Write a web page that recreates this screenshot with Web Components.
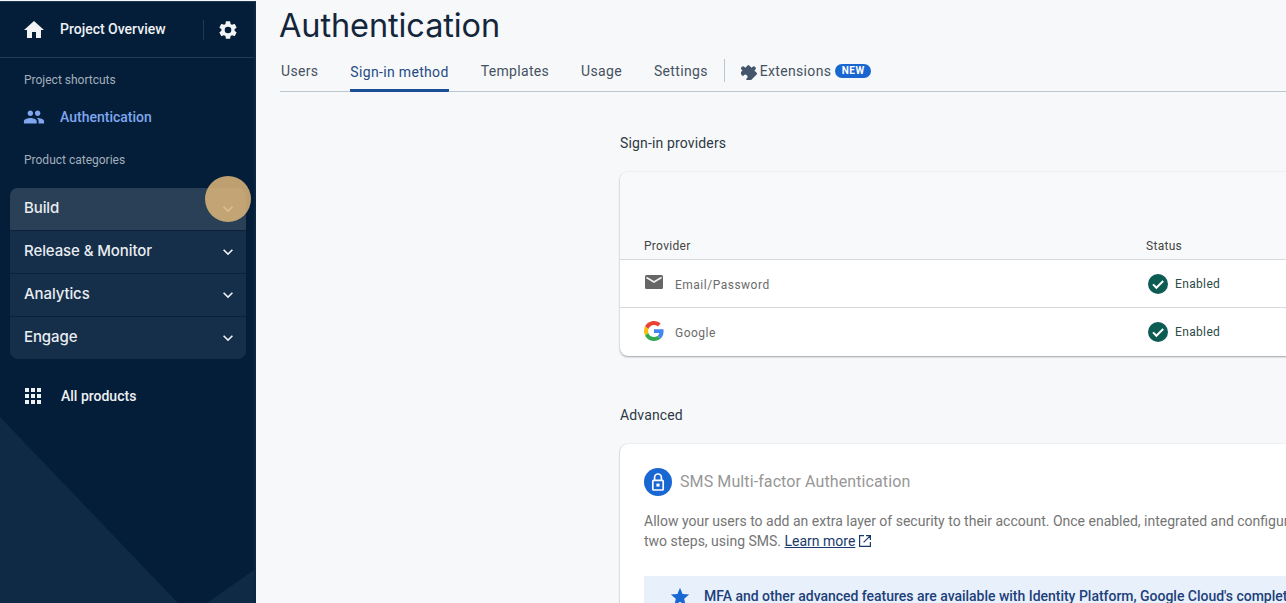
<!DOCTYPE html>
<html lang="en">
<head>
<meta charset="utf-8">
<title>Authentication</title>
<style>
  html, body { margin: 0; height: 100%; overflow: hidden; background: #f6f8fa; }
</style>
</head>
<body>
<fb-console></fb-console>

<script>
const ICONS = {
  home: '<svg width="24" height="24" viewBox="0 0 24 24" fill="#f1f3f4"><path d="M10 20v-6h4v6h5v-8h3L12 3 2 12h3v8z"/></svg>',
  gear: '<svg width="22" height="22" viewBox="0 0 24 24" fill="#f1f3f4"><path d="M19.14 12.94c.04-.3.06-.61.06-.94 0-.32-.02-.64-.07-.94l2.03-1.58a.49.49 0 0 0 .12-.61l-1.92-3.32a.49.49 0 0 0-.59-.22l-2.39.96c-.5-.38-1.03-.7-1.62-.94l-.36-2.54a.48.48 0 0 0-.48-.41h-3.84a.47.47 0 0 0-.47.41l-.36 2.54c-.59.24-1.13.57-1.62.94l-2.39-.96a.49.49 0 0 0-.59.22L2.74 8.87a.48.48 0 0 0 .12.61l2.03 1.58c-.05.3-.09.63-.09.94s.02.64.07.94l-2.03 1.58a.49.49 0 0 0-.12.61l1.92 3.32c.12.22.37.29.59.22l2.39-.96c.5.38 1.03.7 1.62.94l.36 2.54c.05.24.24.41.48.41h3.84c.24 0 .44-.17.47-.41l.36-2.54c.59-.24 1.13-.56 1.62-.94l2.39.96c.22.08.47 0 .59-.22l1.92-3.32a.48.48 0 0 0-.12-.61zM12 15.6A3.6 3.6 0 1 1 12 8.4a3.6 3.6 0 0 1 0 7.2z"/></svg>',
  people: '<svg width="22" height="22" viewBox="0 0 24 24" fill="#7fa6ee"><path d="M16 11c1.66 0 2.99-1.34 2.99-3S17.66 5 16 5s-3 1.34-3 3 1.34 3 3 3zm-8 0c1.66 0 2.99-1.34 2.99-3S9.66 5 8 5 5 6.34 5 8s1.34 3 3 3zm0 2c-2.33 0-7 1.17-7 3.5V19h14v-2.5C15 14.17 10.33 13 8 13zm8 0c-.29 0-.62.02-.97.05C16.19 13.89 17 15.02 17 16.5V19h6v-2.5c0-2.33-4.67-3.5-7-3.5z"/></svg>',
  chevron: '<svg width="20" height="20" viewBox="0 0 24 24" fill="#eef1f4"><path d="M7.41 8.59 12 13.17l4.59-4.58L18 10l-6 6-6-6z"/></svg>',
  grid: '<svg width="18" height="18" viewBox="0 0 18 18" fill="#eef1f4"><path d="M1 1h4v4H1zM7 1h4v4H7zM13 1h4v4h-4zM1 7h4v4H1zM7 7h4v4H7zM13 7h4v4h-4zM1 13h4v4H1zM7 13h4v4H7zM13 13h4v4h-4z"/></svg>',
  puzzle: '<svg width="16" height="16" viewBox="2 2 20 20" fill="#44566c"><g transform="rotate(-45 12 12)"><path d="M19.5 10.5H18V6.5A1.5 1.5 0 0 0 16.5 5H12.5V3.5a2.5 2.5 0 0 0-5 0V5H4.5A1.5 1.5 0 0 0 3 6.5v3.8h1.5a2.7 2.7 0 0 1 0 5.4H3v3.8A1.5 1.5 0 0 0 4.5 21h12a1.5 1.5 0 0 0 1.5-1.5v-4h1.5a2.5 2.5 0 0 0 0-5z"/></g></svg>',
  mail: '<svg width="18" height="14" viewBox="0 0 18 14"><rect width="18" height="14" rx="1.5" fill="#666"/><path d="M1.5 2.5 9 7l7.5-4.5" fill="none" stroke="#f1f1f1" stroke-width="1.6"/></svg>',
  google: '<svg width="20" height="20" viewBox="0 0 48 48"><path fill="#EA4335" d="M24 9.5c3.54 0 6.71 1.22 9.21 3.6l6.85-6.85C35.9 2.38 30.47 0 24 0 14.62 0 6.51 5.38 2.56 13.22l7.98 6.19C12.43 13.72 17.74 9.5 24 9.5z"/><path fill="#4285F4" d="M46.98 24.55c0-1.57-.15-3.09-.38-4.55H24v9.02h12.94c-.58 2.96-2.26 5.48-4.78 7.18l7.73 6c4.51-4.18 7.09-10.36 7.09-17.65z"/><path fill="#FBBC05" d="M10.53 28.59c-.48-1.45-.76-2.99-.76-4.59s.27-3.14.76-4.59l-7.98-6.19C.92 16.46 0 20.12 0 24c0 3.88.92 7.54 2.56 10.78l7.97-6.19z"/><path fill="#34A853" d="M24 48c6.48 0 11.93-2.13 15.89-5.81l-7.73-6c-2.15 1.45-4.92 2.3-8.16 2.3-6.26 0-11.57-4.22-13.47-9.91l-7.98 6.19C6.51 42.62 14.62 48 24 48z"/></svg>',
  check: '<svg width="20" height="20" viewBox="0 0 20 20"><circle cx="10" cy="10" r="10" fill="#0d5c54"/><path d="M5 10.4l3.4 3.4L15.2 7" fill="none" stroke="#fff" stroke-width="2"/></svg>',
  lock: '<svg width="28" height="28" viewBox="0 0 28 28"><circle cx="14" cy="14" r="14" fill="#1967d2"/><rect x="8.8" y="12.4" width="10.4" height="9.6" rx="1" fill="none" stroke="#fff" stroke-width="1.7"/><path d="M10.6 12.4V9.4a3.4 3.4 0 0 1 6.8 0v3" fill="none" stroke="#fff" stroke-width="1.7"/><rect x="12.4" y="15.6" width="3.2" height="3" fill="#fff"/></svg>',
  open: '<svg width="14" height="14" viewBox="0 0 14 14" fill="none" stroke="#1a3a6b" stroke-width="1.2"><path d="M6 1.6H1.6v10.8h10.8V8M8 1.6h4.4V6M12.4 1.6 5.6 8.4"/></svg>',
  star: '<svg width="22" height="22" viewBox="0 0 24 24" fill="#1967d2"><path d="M12 17.27 18.18 21l-1.64-7.03L22 9.24l-7.19-.61L12 2 9.19 8.63 2 9.24l5.46 4.73L5.82 21z"/></svg>'
};

function fill (host, html) {
  host.attachShadow({mode: 'open'}).innerHTML = html;
}

class FbConsole extends HTMLElement {
  constructor () {
    super();
    fill(this, `
      <style>
        :host { display: flex; height: 100vh; overflow: hidden; }
        fb-sidebar { flex: 0 0 256px; }
        main { flex: 1; min-width: 0; padding-left: 24px; overflow: hidden; }
      </style>
      <fb-sidebar></fb-sidebar>
      <main>
        <fb-page-header></fb-page-header>
        <fb-signin-panel></fb-signin-panel>
      </main>
    `);
  }
}

class FbSidebar extends HTMLElement {
  constructor () {
    super();
    fill(this, `
      <style>
        :host {
          display: block;
          position: relative;
          overflow: hidden;
          background: #041e39;
          box-sizing: border-box;
          border-top: 1px solid #1f3a55;
          margin-top: 1px;
          border-right: 2px solid #0d2741;
          color: #eef1f4;
          font: 500 14px Roboto, sans-serif;
        }
        :host::before, :host::after {
          content: "";
          position: absolute;
          inset: 0;
          background: #0f2a45;
        }
        :host::before { clip-path: polygon(0 415px, 178px 100%, 0 100%); }
        :host::after { clip-path: polygon(207px 100%, 100% 568px, 100% 100%); }
        .top, .content { position: relative; z-index: 1; }
        .top {
          display: flex;
          align-items: center;
          height: 55px;
          padding: 0 15px 0 22px;
          border-bottom: 1px solid #1f3a55;
        }
        .top .name { margin: -2px 0 0 14px; flex: 1; }
        .top .rule { width: 1px; height: 20px; background: #1f3a55; margin-right: 13px; }
        svg { display: block; }
        .label {
          font-size: 12px;
          font-weight: 400;
          color: #a3afbb;
          padding-left: 24px;
          line-height: 16px;
        }
        .shortcut {
          display: flex;
          align-items: center;
          height: 24px;
          padding-left: 23px;
          margin: 17px 0 23px;
          color: #7fa6ee;
        }
        .shortcut span { margin-left: 15px; }
        .content { padding-top: 14px; }
        fb-nav-group { margin: 20px 8px 0 10px; }
        .all {
          display: flex;
          align-items: center;
          height: 20px;
          padding-left: 24px;
          margin-top: 27px;
        }
        .all span { margin-left: 19px; }
        .marker {
          position: absolute;
          z-index: 2;
          left: 205px;
          top: 174px;
          width: 46px;
          height: 46px;
          border-radius: 50%;
          background: rgba(222, 182, 122, .85);
        }
      </style>
      <div class="top">
        ${ICONS.home}
        <span class="name">Project Overview</span>
        <span class="rule"></span>
        ${ICONS.gear}
      </div>
      <div class="content">
        <div class="label">Project shortcuts</div>
        <div class="shortcut">${ICONS.people}<span>Authentication</span></div>
        <div class="label">Product categories</div>
        <fb-nav-group>
          <fb-nav-row active>Build</fb-nav-row>
          <fb-nav-row>Release &amp; Monitor</fb-nav-row>
          <fb-nav-row>Analytics</fb-nav-row>
          <fb-nav-row>Engage</fb-nav-row>
        </fb-nav-group>
        <div class="all">${ICONS.grid}<span>All products</span></div>
      </div>
      <div class="marker"></div>
    `);
  }
}

class FbNavGroup extends HTMLElement {
  constructor () {
    super();
    fill(this, `
      <style>
        :host { display: block; border-radius: 8px; overflow: hidden; background: #152e49; }
      </style>
      <slot></slot>
    `);
  }
}

class FbNavRow extends HTMLElement {
  constructor () {
    super();
    fill(this, `
      <style>
        :host {
          display: flex;
          align-items: center;
          justify-content: space-between;
          box-sizing: border-box;
          height: 43px;
          padding: 0 8px 0 14px;
          border-bottom: 1px solid #0b2139;
          font: 500 15px Inter, sans-serif;
          letter-spacing: -.1px;
          color: #e8edf2;
        }
        :host(:last-child) { border-bottom: 0; height: 42px; }
        :host([active]) { background: #2a4056; }
        span { margin-bottom: 3px; }
        svg { display: block; }
      </style>
      <span><slot></slot></span>
      ${ICONS.chevron}
    `);
  }
}

class FbPageHeader extends HTMLElement {
  constructor () {
    super();
    fill(this, `
      <style>
        :host { display: block; color: #14263b; font-family: Roboto, sans-serif; }
        h1 {
          margin: 0 0 0 -1px;
          padding-top: 1px;
          font: 400 32.5px/49px Inter, sans-serif;
          letter-spacing: -.1px;
        }
        nav {
          display: flex;
          align-items: center;
          gap: 32px;
          height: 41px;
          border-bottom: 1px solid #bcc6d0;
          font-size: 14px;
          font-weight: 400;
          letter-spacing: .33px;
          color: #46525f;
        }
        nav > span { display: flex; align-items: center; height: 100%; box-sizing: border-box; padding-top: 1px; }
        .first { margin-left: 1px; }
        .on { color: #274a82; border-bottom: 3px solid #1a4f96; padding-top: 4px !important; margin-bottom: -1px; height: 42px !important; border-radius: 1px; }
        .rule { width: 1px; height: 23px !important; background: #bcc6d0; margin: 0 -16px; padding: 0 !important; }
        .ext { gap: 3px; }
        .ext svg { display: block; margin-top: 2px; }
        b {
          font: 700 10px/14px Roboto, sans-serif;
          letter-spacing: .5px;
          width: 36px;
          text-align: center;
          border-radius: 7px;
          background: #1a66d0;
          color: #fff;
          margin-left: 1px;
        }
      </style>
      <h1>Authentication</h1>
      <nav>
        <span class="first">Users</span>
        <span class="on">Sign-in method</span>
        <span>Templates</span>
        <span>Usage</span>
        <span>Settings</span>
        <span class="rule"></span>
        <span class="ext">${ICONS.puzzle}Extensions<b>NEW</b></span>
      </nav>
    `);
  }
}

class FbSigninPanel extends HTMLElement {
  constructor () {
    super();
    fill(this, `
      <style>
        :host { display: block; padding: 41px 0 0 340px; font-family: Roboto, sans-serif; }
        h2 { margin: 0; font: 400 14px/20px Roboto, sans-serif; letter-spacing: .15px; color: #2f3843; }
        .card {
          width: 1000px;
          background: #fff;
          border-radius: 8px;
          box-shadow: 0 1px 2px rgba(60, 64, 67, .45), 0 0 1px rgba(60, 64, 67, .2);
          overflow: hidden;
        }
        .providers { margin: 19px 0 49px; }
        .head { background: #f8f9fa; font-size: 12px; letter-spacing: .3px; color: #444; }
        .head, fb-provider-row { border-bottom: 1px solid #d6d8db; }
        .head { display: flex; align-items: flex-end; padding-bottom: 6px; box-sizing: border-box; height: 88px; }
        .head span:first-child { width: 526px; padding-left: 24px; box-sizing: border-box; }
        fb-provider-row:last-child { border-bottom: 0; }
        .mfa { margin-top: 19px; padding: 24px; box-sizing: border-box; height: 300px; }
        .mfa .title { display: flex; align-items: center; gap: 8px; height: 28px; font-size: 16px; letter-spacing: .1px; color: #979797; }
        .mfa .title span { margin-bottom: 2px; }
        .mfa svg { display: block; flex: none; }
        .mfa p { margin: 15px 0 0; font-size: 14px; line-height: 20px; color: #757575; white-space: nowrap; }
        .mfa a { color: #1a3a6b; text-decoration: underline; }
        .mfa a + svg { display: inline-block; vertical-align: -2px; margin-left: 3px; }
        .note {
          display: flex;
          gap: 13px;
          margin-top: 25px;
          padding: 10px 0 0 25px;
          height: 60px;
          box-sizing: border-box;
          background: #e8f0fb;
          font-weight: 500;
          font-size: 14px;
          line-height: 20px;
          letter-spacing: -.02px;
          color: #1d3f7a;
          white-space: nowrap;
        }
      </style>
      <h2>Sign-in providers</h2>
      <div class="card providers">
        <div class="head"><span>Provider</span><span>Status</span></div>
        <fb-provider-row icon="mail">Email/Password</fb-provider-row>
        <fb-provider-row icon="google">Google</fb-provider-row>
      </div>
      <h2>Advanced</h2>
      <div class="card mfa">
        <div class="title">${ICONS.lock}<span>SMS Multi-factor Authentication</span></div>
        <p>Allow your users to add an extra layer of security to their account. Once enabled, integrated and configure<br>two steps, using SMS. <a>Learn more</a>${ICONS.open}</p>
        <div class="note">${ICONS.star}<span>MFA and other advanced features are available with Identity Platform, Google Cloud's complete</span></div>
      </div>
    `);
  }
}

class FbProviderRow extends HTMLElement {
  constructor () {
    super();
    const glyph = ICONS[this.getAttribute('icon')];
    fill(this, `
      <style>
        :host { display: flex; align-items: center; height: 48px; box-sizing: border-box; }
        .name {
          display: flex;
          align-items: center;
          width: 526px;
          box-sizing: border-box;
          padding-left: 24px;
          font-size: 12px;
          letter-spacing: .5px;
          color: #6b6b6b;
        }
        .box { width: 31px; height: 20px; display: flex; align-items: center; margin-top: -2px; }
        .box.mail { padding-left: 1px; width: 30px; margin-top: -4px; }
        .text { padding-top: 2px; }
        .state {
          display: flex;
          align-items: center;
          gap: 7px;
          padding-left: 2px;
          font-size: 12px;
          letter-spacing: .35px;
          color: #2c4a46;
        }
        svg { display: block; }
      </style>
      <div class="name"><span class="box ${this.getAttribute('icon')}">${glyph}</span><span class="text"><slot></slot></span></div>
      <div class="state">${ICONS.check}Enabled</div>
    `);
  }
}

customElements.define('fb-console', FbConsole);
customElements.define('fb-sidebar', FbSidebar);
customElements.define('fb-nav-group', FbNavGroup);
customElements.define('fb-nav-row', FbNavRow);
customElements.define('fb-page-header', FbPageHeader);
customElements.define('fb-signin-panel', FbSigninPanel);
customElements.define('fb-provider-row', FbProviderRow);
</script>
</body>
</html>
